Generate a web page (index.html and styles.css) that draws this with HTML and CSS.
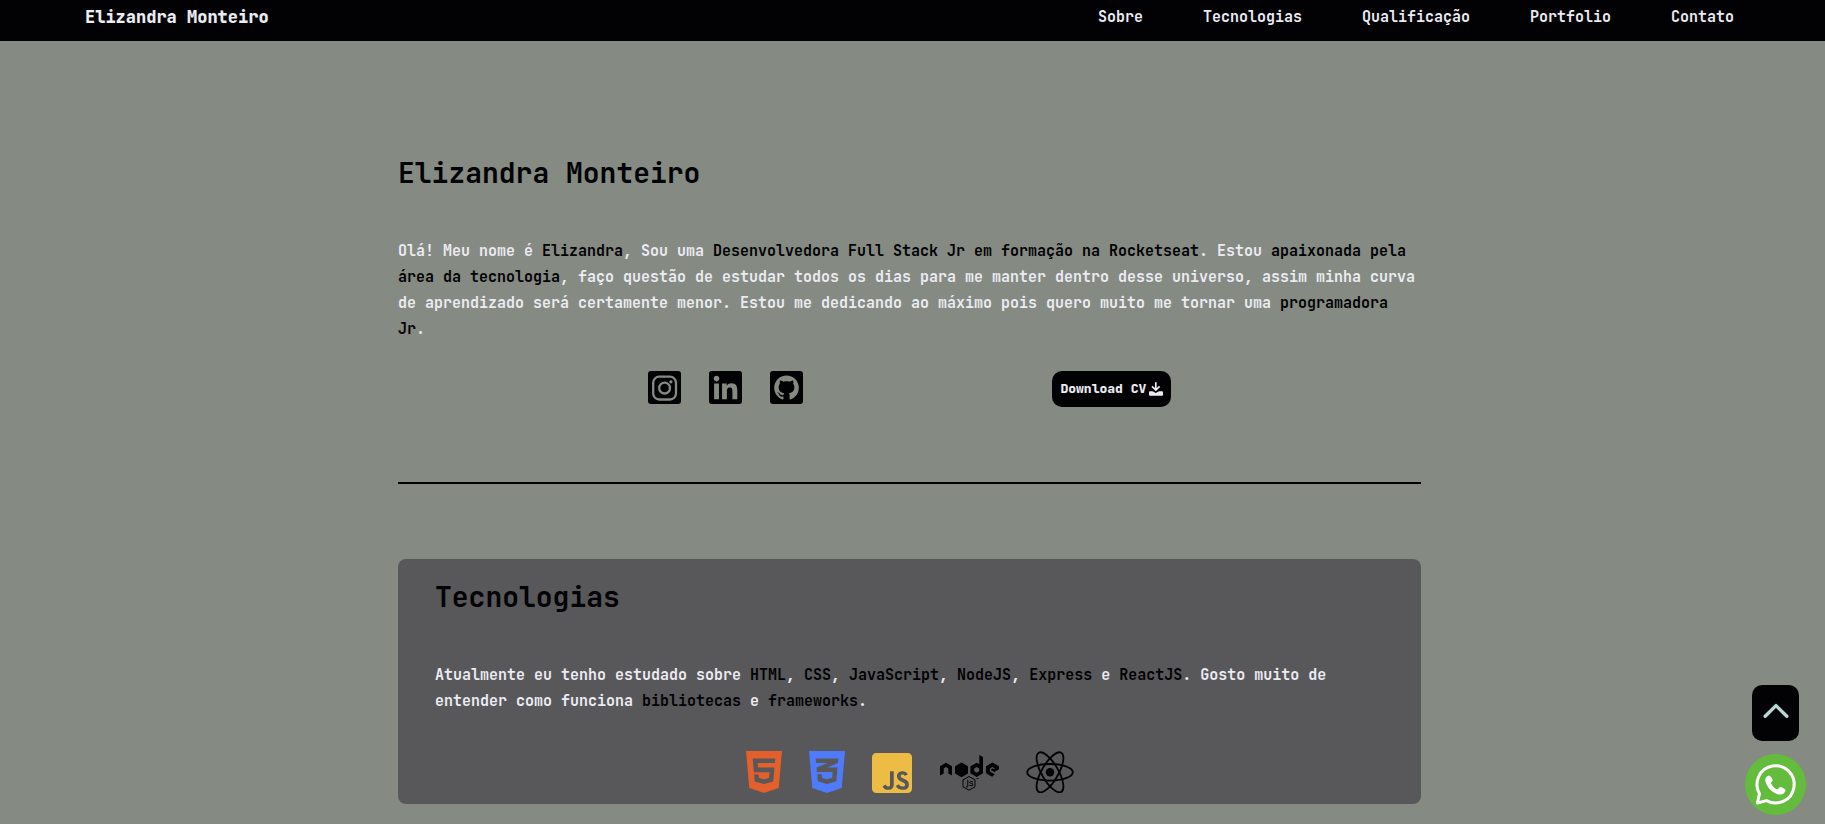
FILE: index.html
```html
<!DOCTYPE html>
<html lang="pt-BR">
<head>
<meta charset="utf-8">
<meta name="viewport" content="width=device-width, initial-scale=1">
<title>Elizandra Monteiro</title>
<link rel="stylesheet" href="styles.css">
</head>
<body>
<header class="header">
  <a class="brand" href="#sobre">Elizandra Monteiro</a>
  <nav class="nav" aria-label="Principal">
    <a href="#sobre">Sobre</a>
    <a href="#tecnologias">Tecnologias</a>
    <a href="#qualificacao">Qualificação</a>
    <a href="#portfolio">Portfolio</a>
    <a href="#contato">Contato</a>
  </nav>
</header>

<main class="main">
  <section class="about" id="sobre">
    <h1 class="title">Elizandra Monteiro</h1>
    <p class="text">Olá! Meu nome é <strong>Elizandra</strong>, Sou uma <strong>Desenvolvedora Full Stack Jr em formação na Rocketseat</strong>. Estou <strong>apaixonada pela área da tecnologia</strong>, faço questão de estudar todos os dias para me manter dentro desse universo, assim minha curva de aprendizado será certamente menor. Estou me dedicando ao máximo pois quero muito me tornar uma <strong>programadora Jr</strong>.</p>
    <div class="actions">
      <div class="social">
        <a href="#instagram" aria-label="Instagram"><svg viewBox="0 0 33 33"><rect width="33" height="33" rx="3"/><g class="outline"><rect x="5.200" y="5.700" width="22.800" height="22.800" rx="6"/><circle cx="16.600" cy="17.100" r="5.400"/></g><circle class="cutout" cx="22.900" cy="10.800" r="1.600"/></svg></a>
        <a href="#linkedin" aria-label="LinkedIn"><svg viewBox="0 32 448 448"><path d="M416 32H31.9C14.3 32 0 46.5 0 64.3v383.4C0 465.5 14.3 480 31.9 480H416c17.6 0 32-14.5 32-32.3V64.3c0-17.8-14.4-32.3-32-32.3zM135.4 416H69V202.2h66.5V416zm-33.2-243c-21.3 0-38.5-17.3-38.5-38.5S80.9 96 102.2 96c21.2 0 38.5 17.3 38.5 38.5 0 21.3-17.2 38.5-38.5 38.5zm282.1 243h-66.4V312c0-24.8-.5-56.7-34.5-56.7-34.6 0-39.9 27-39.9 54.9V416h-66.4V202.2h63.7v29.2h.9c8.9-16.8 30.6-34.5 62.9-34.5 67.2 0 79.7 44.3 79.7 101.9V416z"/></svg></a>
        <a href="#github" aria-label="GitHub"><svg viewBox="0 0 33 33"><rect width="33" height="33" rx="3"/><path class="cutout" transform="translate(4.2 4.4) scale(1.54)" d="M8 0C3.58 0 0 3.58 0 8c0 3.54 2.29 6.53 5.47 7.59.4.07.55-.17.55-.38 0-.19-.01-.82-.01-1.49-2.01.37-2.53-.49-2.69-.94-.09-.23-.48-.94-.82-1.13-.28-.15-.68-.52-.01-.53.63-.01 1.08.58 1.23.82.72 1.21 1.87.87 2.33.66.07-.52.28-.87.51-1.07-1.78-.2-3.64-.89-3.64-3.95 0-.87.31-1.59.82-2.15-.08-.2-.36-1.02.08-2.12 0 0 .67-.21 2.2.82.64-.18 1.32-.27 2-.27s1.36.09 2 .27c1.53-1.04 2.2-.82 2.2-.82.44 1.1.16 1.92.08 2.12.51.56.82 1.27.82 2.15 0 3.07-1.87 3.75-3.65 3.95.29.25.54.73.54 1.48 0 1.07-.01 1.93-.01 2.2 0 .21.15.46.55.38A8.01 8.01 0 0 0 16 8c0-4.42-3.58-8-8-8z"/></svg></a>
      </div>
      <button class="download" type="button">Download CV
        <svg viewBox="0 0 14 14" aria-hidden="true"><path d="M6.800.3v7.500M3 4.300l3.800 3.800 3.800-3.800" fill="none" stroke="currentColor" stroke-width="1.700"/><path d="M1 9.200h2.700l3.100 1.800 3.100-1.800H13q1 0 1 1v2.600q0 1-1 1H1q-1 0-1-1v-2.600q0-1 1-1z" fill="currentColor"/></svg>
      </button>
    </div>
  </section>

  <hr class="divider">

  <section class="card" id="tecnologias">
    <h2 class="title">Tecnologias</h2>
    <p class="text">Atualmente eu tenho estudado sobre <strong>HTML</strong>, <strong>CSS</strong>, <strong>JavaScript</strong>, <strong>NodeJS</strong>, <strong>Express</strong> e <strong>ReactJS</strong>. Gosto muito de entender como funciona <strong>bibliotecas</strong> e <strong>frameworks</strong>.</p>
    <div class="techs">
      <svg class="tech-shield html" viewBox="0 32 384 448" role="img" aria-label="HTML5"><path d="M0 32l34.9 395.8L191.5 480l157.6-52.2L384 32H0zm308.2 127.900H124.400l4.100 49.400h175.600l-13.600 148.400-97.900 27v.3h-1.100l-98.700-27.300-6-75.800h47.700L138 320l53.500 14.500 53.700-14.500 6-62.200H84.300L71.500 112.200h241.100l-4.400 47.700z"/></svg>
      <svg class="tech-shield css" viewBox="0 32 384 448" role="img" aria-label="CSS3"><path d="M0 32l34.900 395.800L192 480l157.100-52.200L384 32H0zm313.100 80l-4.800 47.300L193 208.600l-.3.1h111.500l-12.800 146.600-98.200 28.700-98.800-29.200-6.400-73.900h48.900l3.200 38.300 52.600 13.300 54.700-15.400 3.700-61.600-166.300-.5v-.1l-.2.1-3.600-46.300L193.100 162l6.500-2.700H76.700L70.900 112h242.200z"/></svg>
      <svg class="tech-js" viewBox="0 32 448 448" role="img" aria-label="JavaScript"><path d="M400 32H48C21.500 32 0 53.500 0 80v352c0 26.500 21.500 48 48 48h352c26.500 0 48-21.500 48-48V80c0-26.500-21.500-48-48-48zM243.800 381.400c0 43.600-25.600 63.500-62.900 63.500-33.700 0-53.200-17.400-63.200-38.500l34.300-20.700c6.600 11.700 12.600 21.600 27.100 21.600 13.800 0 22.600-5.400 22.600-26.500V237.700h42.100v143.700zm99.600 63.500c-39.100 0-64.400-18.600-76.700-43l34.300-19.800c9 14.700 20.800 25.600 41.500 25.600 17.400 0 28.600-8.700 28.600-20.800 0-14.400-11.400-19.500-30.700-28l-10.500-4.500c-30.400-12.900-50.500-29.200-50.500-63.500 0-31.600 24.100-55.600 61.600-55.600 26.800 0 46 9.300 59.800 33.700L368 290c-7.200-12.900-15-18-27.100-18-12.300 0-20.100 7.800-20.100 18 0 12.600 7.800 17.700 25.900 25.600l10.500 4.500c35.800 15.300 55.900 31 55.900 66.200 0 37.800-29.800 58.600-69.700 58.600z"/></svg>
      <svg class="tech-node" viewBox="0 0 60 42" role="img" aria-label="Node.js">
        <path d="M1 24.500V15.300l6-3.600 6 3.600v9.200l-3.700-2.100v-5L7 16l-2.300 1.400v5z"/>
        <path d="M22.500 11.500l6.500 3.700v7.400l-6.500 3.700-6.500-3.700v-7.400z"/>
        <path fill-rule="evenodd" d="M40.300 4l3.700 2.100v16.200L37.700 26l-6.300-3.700v-7l6.300-3.600 2.600 1.500zM37.700 16l-2.500 1.400v2.900l2.500 1.400 2.500-1.400v-2.900z"/>
        <path d="M53.500 11.500l6.500 3.700v3l-5 3-1.500-2.300 2.400-1.400-2.400-1.400-2.600 1.500v2.800l4.800 2.800-2.500 2.600-6.200-3.500v-7.100z"/>
        <path d="M53.500 17.400l1.300.7v1.400l-1.300.7-1.200-.7v-1.400z"/>
        <g fill="none" stroke="currentColor"><path d="M30 25.500l6 3.400v6.900l-6 3.400-6-3.400v-6.900z"/><path d="M28.800 28.800v6.400q0 1.300-1.800.6M34 30.800q-3.300-1.200-3.300.5 0 .9 1.600 1 1.900.2 1.800 1.500-.3 1.500-3.700.5"/></g>
        <path d="M37.500 27h2v.8h-2z"/>
      </svg>
      <svg class="tech-react" viewBox="0 0 48 42" role="img" aria-label="React"><circle cx="24" cy="21.300" r="4.200"/><g fill="none" stroke="currentColor" stroke-width="1.800"><ellipse cx="24" cy="21.300" rx="22.800" ry="8.300"/><ellipse cx="24" cy="21.300" rx="22.600" ry="8.300" transform="rotate(60 24 21.300)"/><ellipse cx="24" cy="21.300" rx="22.600" ry="8.300" transform="rotate(120 24 21.300)"/></g></svg>
    </div>
  </section>
</main>

<div class="floating">
  <a class="to-top" href="#sobre" aria-label="Voltar ao topo"><svg viewBox="0 0 26 16"><path d="M2.200 13.200 13 2.600l10.800 10.600" fill="none" stroke="currentColor" stroke-width="3.400" stroke-linecap="round" stroke-linejoin="round"/></svg></a>
  <a class="whatsapp" href="#whatsapp" aria-label="WhatsApp"><svg viewBox="0 0 61 61"><circle cx="30.500" cy="30.500" r="30.500" fill="#64bc3c"/><path d="M14.500 39.700A18.600 18.600 0 1 1 21.500 46.600L12.400 49z" fill="none" stroke="#fff" stroke-width="3" stroke-linejoin="round"/><path d="M23.800 21.500c-3 .8-4.100 3.600-3.200 6.600 1.900 6 7.200 11.200 13 12.300 3.800.5 6.300-1 7-4.200-.2-1.300-4.900-3.700-6-3l-2.200 2.300c-2.900-1.200-5.300-3.600-6.500-6.500l1.700-2.200c.6-1-1.900-5.300-3.800-5.300z" fill="#fff"/></svg></a>
</div>
</body>
</html>
```

FILE: styles.css
```css
* {
  box-sizing: border-box;
  margin: 0;
  padding: 0;
}

body {
  padding-right: 6px;
  background: #858a83;
  color: #ebebf2;
  font-family: "JetBrains Mono", "DejaVu Sans Mono", "Liberation Mono", monospace;
  font-size: 15px;
  font-weight: 700;
  line-height: 26px;
}

a {
  color: inherit;
  text-decoration: none;
}

svg {
  display: block;
  fill: currentColor;
}

.header {
  display: flex;
  align-items: center;
  justify-content: space-between;
  margin-right: -6px;
  padding: 4px 91px 11px 85px;
  background: #020204;
}

.brand {
  font-size: 17px;
  font-weight: 800;
}

.nav {
  display: flex;
  gap: 60px;
}

.main {
  width: 1023px;
  max-width: 90%;
  margin: 0 auto;
  padding: 112px 0 20px;
}

.title {
  margin-bottom: 45px;
  color: #020204;
  font-size: 28px;
  font-weight: 700;
  line-height: 40px;
}

.text strong {
  color: #020204;
  font-weight: 600;
}

.actions {
  display: flex;
  align-items: flex-start;
  justify-content: space-evenly;
  margin-top: 29px;
}

.social {
  display: flex;
  gap: 28px;
  color: #020204;
}

.social svg {
  width: 33px;
  height: 33px;
}

.cutout {
  fill: #858a83;
}

.outline {
  fill: none;
  stroke: #858a83;
  stroke-width: 2.3;
}

.download {
  display: flex;
  align-items: center;
  gap: 3px;
  height: 36px;
  padding: 0 8px;
  border: 0;
  border-radius: 10px;
  background: #020204;
  color: inherit;
  font: inherit;
  font-size: 13px;
  font-weight: 800;
}

.download svg {
  width: 14px;
  height: 14px;
}

.divider {
  height: 2px;
  margin: 75px 0;
  border: 0;
  background: #020204;
}

.card {
  padding: 18px 37px 11px;
  border-radius: 8px;
  background: #58585a;
}

.techs {
  display: flex;
  align-items: flex-end;
  justify-content: center;
  gap: 27px;
  margin-top: 37px;
  color: #020204;
}

.tech-shield {
  width: 36px;
  height: 42px;
}

.html {
  fill: #e35f2b;
}

.css {
  fill: #4f7afa;
}

.tech-js {
  width: 40px;
  height: 40px;
  fill: #edbc45;
}

.tech-node {
  width: 60px;
  height: 42px;
}

.tech-react {
  width: 48px;
  height: 42px;
}

.floating {
  position: fixed;
  right: 19px;
  bottom: 9px;
  display: flex;
  flex-direction: column;
  align-items: center;
  gap: 13px;
}

.to-top {
  display: grid;
  place-items: center;
  width: 47px;
  height: 56px;
  padding-bottom: 4px;
  border-radius: 10px;
  background: #020204;
  color: #b9d8d2;
}

.to-top svg {
  width: 26px;
  height: 16px;
}

.whatsapp svg {
  width: 61px;
  height: 61px;
}
```
